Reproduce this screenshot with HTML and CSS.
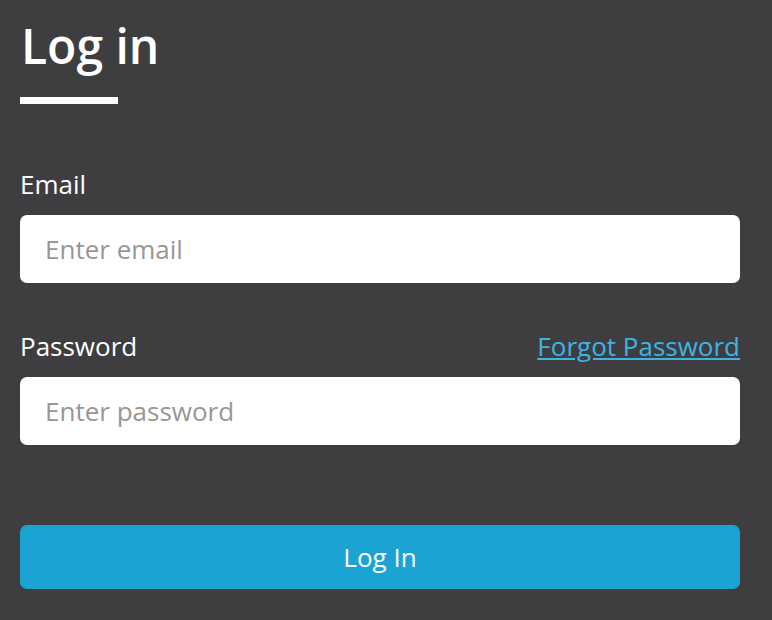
FILE: index.html
```html
<!DOCTYPE html>
<html lang="en">
<head>
    <meta charset="UTF-8">
    <meta name="viewport" content="width=device-width, initial-scale=1.0">
    <title>Log in</title>
    <link rel="stylesheet" href="styles.css">
</head>
<body>
    <div class="login">
        <!-- Heading -->
        <h1 class="login-title">Log in</h1>
        <div class="title-bar"></div>

        <form class="login-form">
            <div class="field">
                <div class="field-head">
                    <label for="email">Email</label>
                </div>
                <input type="email" id="email" name="email" placeholder="Enter email">
            </div>

            <div class="field">
                <div class="field-head">
                    <label for="password">Password</label>
                    <a href="#" class="forgot">Forgot Password</a>
                </div>
                <input type="password" id="password" name="password" placeholder="Enter password">
            </div>

            <button type="submit">Log In</button>
        </form>
    </div>
</body>
</html>
```

FILE: styles.css
```css
/* General Reset */
* {
    margin: 0;
    padding: 0;
    box-sizing: border-box;
}

body {
    font-family: 'Open Sans', 'Noto Sans', sans-serif;
    background: #3e3e40;
    color: #fff;
}

.login {
    padding: 14px 32px 0 20px;
}

.login-title {
    font-size: 48px;
    font-weight: 600;
    line-height: 64px;
    padding-left: 1px;
}

.title-bar {
    width: 98px;
    height: 7px;
    background: #fff;
    margin-top: 19px;
}

.login-form {
    display: flex;
    flex-direction: column;
    margin-top: 62px;
}

.field {
    display: flex;
    flex-direction: column;
    margin-bottom: 45px;
}

.field-head {
    display: flex;
    justify-content: space-between;
    align-items: baseline;
    height: 36px;
    margin-bottom: 13px;
    line-height: 36px;
}

label {
    font-size: 26px;
    font-weight: 500;
}

.forgot {
    font-size: 26px;
    color: #3db4e4;
    text-decoration: underline;
}

input {
    width: 100%;
    height: 68px;
    border: none;
    border-radius: 7px;
    background: #fff;
    padding: 0 25px;
    font-family: inherit;
    font-size: 26px;
    color: #333;
}

input::placeholder {
    color: #979797;
}

input:focus {
    outline: none;
}

button {
    width: 100%;
    height: 64px;
    margin-top: 35px;
    border: none;
    border-radius: 7px;
    background: #1ba3d4;
    color: #fff;
    font-family: inherit;
    font-size: 26px;
    cursor: pointer;
}
```
